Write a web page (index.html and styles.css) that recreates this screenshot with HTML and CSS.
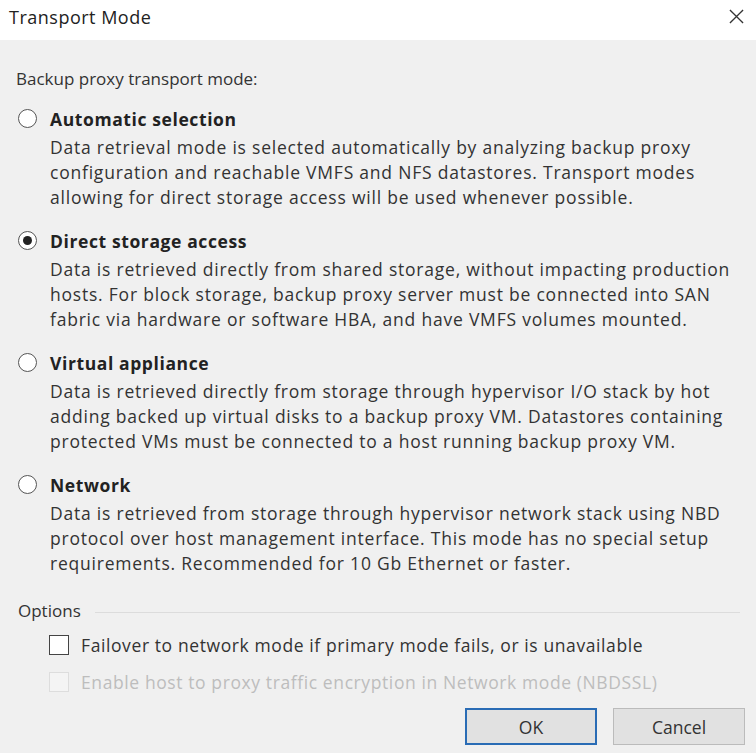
FILE: index.html
```html
<!DOCTYPE html>
<html>
<head>
<meta charset="utf-8">
<link rel="stylesheet" href="styles.css">
</head>
<body>
<div class="dialog">
  <div class="titlebar">
    <span class="title">Transport Mode</span>
    <svg class="close" width="16" height="16" viewBox="0 0 16 16"><path d="M1 1L15 15M15 1L1 15" stroke="#333" stroke-width="1.4" fill="none"/></svg>
  </div>
  <div class="body">
    <div class="heading">Backup proxy transport mode:</div>
    <div class="option">
      <span class="radio"></span>
      <div class="otext">
        <div class="olabel">Automatic selection</div>
        <div class="odesc">Data retrieval mode is selected automatically by analyzing backup proxy<br>configuration and reachable VMFS and NFS datastores. Transport modes<br>allowing for direct storage access will be used whenever possible.</div>
      </div>
    </div>
    <div class="option">
      <span class="radio checked"></span>
      <div class="otext">
        <div class="olabel">Direct storage access</div>
        <div class="odesc">Data is retrieved directly from shared storage, without impacting production<br>hosts. For block storage, backup proxy server must be connected into SAN<br>fabric via hardware or software HBA, and have VMFS volumes mounted.</div>
      </div>
    </div>
    <div class="option">
      <span class="radio"></span>
      <div class="otext">
        <div class="olabel">Virtual appliance</div>
        <div class="odesc">Data is retrieved directly from storage through hypervisor I/O stack by hot<br>adding backed up virtual disks to a backup proxy VM. Datastores containing<br>protected VMs must be connected to a host running backup proxy VM.</div>
      </div>
    </div>
    <div class="option">
      <span class="radio"></span>
      <div class="otext">
        <div class="olabel">Network</div>
        <div class="odesc">Data is retrieved from storage through hypervisor network stack using NBD<br>protocol over host management interface. This mode has no special setup<br>requirements. Recommended for 10 Gb Ethernet or faster.</div>
      </div>
    </div>
    <div class="group">
      <span class="gtitle">Options</span>
      <span class="gline"></span>
    </div>
    <div class="check first">
      <span class="box"></span>
      <span class="ctext">Failover to network mode if primary mode fails, or is unavailable</span>
    </div>
    <div class="check disabled">
      <span class="box"></span>
      <span class="ctext">Enable host to proxy traffic encryption in Network mode (NBDSSL)</span>
    </div>
    <div class="buttons">
      <button class="btn default">OK</button>
      <button class="btn">Cancel</button>
    </div>
  </div>
</div>
</body>
</html>
```
FILE: styles.css
```css
html, body {
  margin: 0;
  padding: 0;
}
body {
  width: 756px;
  height: 753px;
  overflow: hidden;
  background: #f0f0f0;
  font-family: "Open Sans", "Noto Sans", sans-serif;
  color: #333;
}
.dialog {
  display: flex;
  flex-direction: column;
  height: 753px;
}
.titlebar {
  height: 40px;
  background: #fff;
  display: flex;
  align-items: center;
  justify-content: space-between;
  padding: 0 12px 7px 9px;
  box-sizing: border-box;
}
.title {
  font-size: 18px;
  letter-spacing: 0.5px;
  color: #222;
}
.close {
  width: 15px;
  height: 15px;
}
.body {
  flex: 1;
  padding: 26px 0 0 16px;
  display: flex;
  flex-direction: column;
}
.heading {
  font-size: 17px;
  line-height: 26px;
  margin-bottom: 14px;
}
.option {
  display: flex;
  align-items: flex-start;
  margin-bottom: 18px;
}
.radio {
  width: 17px;
  height: 17px;
  border: 1.5px solid #555;
  border-radius: 50%;
  background: #fff;
  margin: 3px 13px 0 2px;
  flex: none;
  position: relative;
  box-sizing: content-box;
}
.radio.checked::after {
  content: "";
  position: absolute;
  left: 4px;
  top: 4px;
  width: 9px;
  height: 9px;
  border-radius: 50%;
  background: #222;
}
.olabel {
  font-weight: bold;
  font-size: 17.5px;
  letter-spacing: 0.6px;
  line-height: 26px;
  margin-bottom: 3px;
  color: #222;
}
.odesc {
  font-size: 17.5px;
  letter-spacing: 0.78px;
  line-height: 25px;
  white-space: nowrap;
}
.group {
  display: flex;
  align-items: center;
  margin-top: 4px;
  padding-left: 2px;
}
.gtitle {
  font-size: 17px;
  line-height: 26px;
  margin-right: 14px;
}
.gline {
  flex: 1;
  height: 1px;
  background: #dcdcdc;
  margin-right: 16px;
  margin-top: 3px;
}
.check {
  display: flex;
  align-items: center;
  padding-left: 33px;
  height: 37px;
}
.check.first {
  margin-top: 2px;
}
.box {
  width: 18px;
  height: 18px;
  border: 1.5px solid #444;
  background: #fff;
  margin-right: 12px;
  flex: none;
}
.ctext {
  font-size: 17.5px;
  letter-spacing: 0.6px;
  white-space: nowrap;
}
.check.disabled .box {
  border-color: #ddd;
  background: #f4f4f4;
}
.check.disabled .ctext {
  color: #bdbdbd;
}
.buttons {
  display: flex;
  justify-content: flex-end;
  gap: 16px;
  padding-right: 11px;
  margin-top: 8px;
}
.btn {
  width: 132px;
  height: 37px;
  font-family: inherit;
  font-size: 17.5px;
  color: #333;
  background: #e1e1e1;
  border: 1.5px solid #bbb;
  box-sizing: border-box;
}
.btn.default {
  border: 2px solid #2a6cb5;
}
```
